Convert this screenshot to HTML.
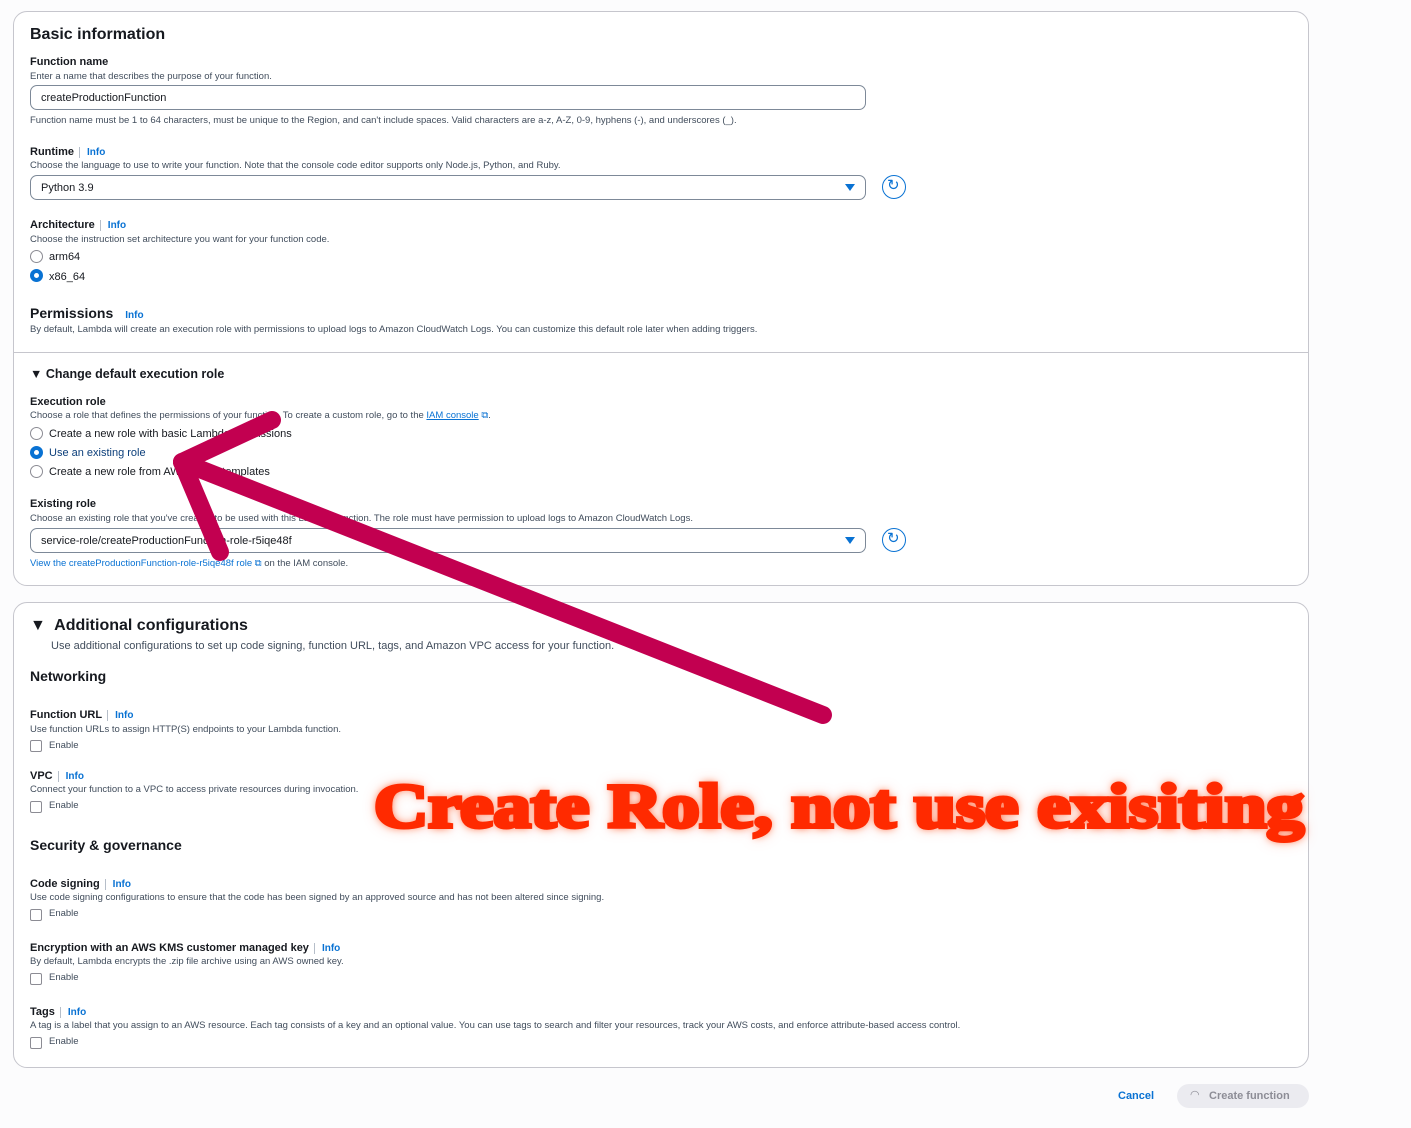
<!DOCTYPE html>
<html><head><meta charset="utf-8"><style>
*{margin:0;padding:0;box-sizing:border-box}
body{width:1411px;height:1128px;background:#fcfcfd;font-family:"Liberation Sans",sans-serif;color:#16191f;position:relative;overflow:hidden}
.a{position:absolute;white-space:nowrap}
.panel{position:absolute;background:#fff;border:1px solid #c6c6cd;border-radius:14px}
.h{font-size:16px;font-weight:bold}
.l{font-size:11px;font-weight:bold}
.d{font-size:9.5px;color:#414d5c}
.info{color:#0972d3;font-size:10px;font-weight:bold;border-left:1px solid #b6bec9;padding-left:7px;margin-left:5px}
.inp{position:absolute;border:1px solid #7d8998;border-radius:7px;height:25px;font-size:11px;padding:6px 10px}
.r{position:absolute;width:13px;height:13px;border:1px solid #8c8c94;border-radius:50%}
.r.on{border:4px solid #0972d3}
.t{font-size:11px}
.cb{position:absolute;width:12px;height:12px;border:1px solid #8c8c94;border-radius:2px}
.caret{position:absolute;width:0;height:0;border-left:5px solid transparent;border-right:5px solid transparent;border-top:7px solid #0972d3}
.ref{position:absolute;width:24px;height:24px;border:1.5px solid #0972d3;border-radius:50%}
</style></head><body>
<div class="panel" style="left:13px;top:11px;width:1296px;height:575px"></div>
<div class="a" style="left:14px;top:352px;width:1294px;border-top:1px solid #c6c6cd"></div>
<div class="a h" style="left:30px;top:26px">Basic information</div>
<div class="a l" style="left:30px;top:56px">Function name</div>
<div class="a d" style="left:30px;top:71px">Enter a name that describes the purpose of your function.</div>
<div class="inp" style="left:30px;top:85px;width:836px">createProductionFunction</div>
<div class="a d" style="left:30px;top:115px">Function name must be 1 to 64 characters, must be unique to the Region, and can't include spaces. Valid characters are a-z, A-Z, 0-9, hyphens (-), and underscores (_).</div>
<div class="a l" style="left:30px;top:146px">Runtime<span class="info">Info</span></div>
<div class="a d" style="left:30px;top:160px">Choose the language to use to write your function. Note that the console code editor supports only Node.js, Python, and Ruby.</div>
<div class="inp" style="left:30px;top:175px;width:836px">Python 3.9</div>
<div class="caret" style="left:845px;top:184px"></div>
<div class="ref" style="left:882px;top:175px"></div>
<div class="a" style="left:887px;top:176px;font-size:15px;color:#0972d3">↻</div>
<div class="a l" style="left:30px;top:219px">Architecture<span class="info">Info</span></div>
<div class="a d" style="left:30px;top:234px">Choose the instruction set architecture you want for your function code.</div>
<div class="r" style="left:30px;top:250px"></div><div class="a t" style="left:49px;top:251px">arm64</div>
<div class="r on" style="left:30px;top:269px"></div><div class="a t" style="left:49px;top:271px">x86_64</div>
<div class="a" style="left:30px;top:305px;font-size:14px;font-weight:bold">Permissions<span class="info" style="border:none">Info</span></div>
<div class="a d" style="left:30px;top:324px">By default, Lambda will create an execution role with permissions to upload logs to Amazon CloudWatch Logs. You can customize this default role later when adding triggers.</div>
<div class="a" style="left:30px;top:367px;font-size:12.5px;font-weight:bold">▼ Change default execution role</div>
<div class="a l" style="left:30px;top:396px">Execution role</div>
<div class="a d" style="left:30px;top:410px">Choose a role that defines the permissions of your function. To create a custom role, go to the <span style="color:#0972d3;text-decoration:underline">IAM console</span> <span style="color:#0972d3">⧉</span>.</div>
<div class="r" style="left:30px;top:427px"></div><div class="a t" style="left:49px;top:428px">Create a new role with basic Lambda permissions</div>
<div class="r on" style="left:30px;top:446px"></div><div class="a t" style="left:49px;top:447px;color:#0b3e7a">Use an existing role</div>
<div class="r" style="left:30px;top:465px"></div><div class="a t" style="left:49px;top:466px">Create a new role from AWS policy templates</div>
<div class="a l" style="left:30px;top:498px">Existing role</div>
<div class="a d" style="left:30px;top:513px">Choose an existing role that you've created to be used with this Lambda function. The role must have permission to upload logs to Amazon CloudWatch Logs.</div>
<div class="inp" style="left:30px;top:528px;width:836px">service-role/createProductionFunction-role-r5iqe48f</div>
<div class="caret" style="left:845px;top:537px"></div>
<div class="ref" style="left:882px;top:528px"></div>
<div class="a" style="left:887px;top:529px;font-size:15px;color:#0972d3">↻</div>
<div class="a d" style="left:30px;top:558px"><span style="color:#0972d3">View the createProductionFunction-role-r5iqe48f role ⧉</span> on the IAM console.</div>

<div class="panel" style="left:13px;top:602px;width:1296px;height:466px"></div>
<div class="a" style="left:30px;top:617px;font-size:16px;font-weight:bold">▼&nbsp; Additional configurations</div>
<div class="a" style="left:51px;top:640px;font-size:11px;color:#414d5c">Use additional configurations to set up code signing, function URL, tags, and Amazon VPC access for your function.</div>
<div class="a" style="left:30px;top:668px;font-size:14px;font-weight:bold">Networking</div>
<div class="a l" style="left:30px;top:709px">Function URL<span class="info">Info</span></div>
<div class="a d" style="left:30px;top:724px">Use function URLs to assign HTTP(S) endpoints to your Lambda function.</div>
<div class="cb" style="left:30px;top:740px"></div><div class="a d" style="left:49px;top:740px">Enable</div>
<div class="a l" style="left:30px;top:770px">VPC<span class="info">Info</span></div>
<div class="a d" style="left:30px;top:784px">Connect your function to a VPC to access private resources during invocation.</div>
<div class="cb" style="left:30px;top:801px"></div><div class="a d" style="left:49px;top:800px">Enable</div>
<div class="a" style="left:30px;top:837px;font-size:14px;font-weight:bold">Security &amp; governance</div>
<div class="a l" style="left:30px;top:878px">Code signing<span class="info">Info</span></div>
<div class="a d" style="left:30px;top:892px">Use code signing configurations to ensure that the code has been signed by an approved source and has not been altered since signing.</div>
<div class="cb" style="left:30px;top:909px"></div><div class="a d" style="left:49px;top:908px">Enable</div>
<div class="a l" style="left:30px;top:942px">Encryption with an AWS KMS customer managed key<span class="info">Info</span></div>
<div class="a d" style="left:30px;top:956px">By default, Lambda encrypts the .zip file archive using an AWS owned key.</div>
<div class="cb" style="left:30px;top:973px"></div><div class="a d" style="left:49px;top:972px">Enable</div>
<div class="a l" style="left:30px;top:1006px">Tags<span class="info">Info</span></div>
<div class="a d" style="left:30px;top:1020px">A tag is a label that you assign to an AWS resource. Each tag consists of a key and an optional value. You can use tags to search and filter your resources, track your AWS costs, and enforce attribute-based access control.</div>
<div class="cb" style="left:30px;top:1037px"></div><div class="a d" style="left:49px;top:1036px">Enable</div>

<div class="a" style="left:1118px;top:1090px;font-size:11px;font-weight:bold;color:#0972d3">Cancel</div>
<div class="a" style="left:1177px;top:1084px;width:132px;height:24px;background:#ebebf0;border-radius:12px;font-size:11px;font-weight:bold;color:#8d8d96;padding:6px 0 0 32px">Create function</div>
<div class="a" style="left:1190px;top:1088px;font-size:11px;color:#8d8d96">◠</div>

<svg class="a" style="left:0;top:0" width="1411" height="1128"><g stroke="#c20050" stroke-width="18" stroke-linecap="round" fill="none"><line x1="823" y1="715" x2="182" y2="462"/><line x1="182" y1="462" x2="272" y2="420"/><line x1="182" y1="462" x2="220" y2="552"/></g></svg>
<div class="a" style="left:374px;top:772px;font-family:'Liberation Serif',serif;font-weight:bold;font-size:62px;color:#ff2a00;-webkit-text-stroke:4px #ff2a00;text-shadow:0 0 7px #ff5020,0 0 12px rgba(255,80,30,.5);transform:scaleX(1.21);transform-origin:left top;letter-spacing:0px">Create Role, not use exisiting</div>
</body></html>
